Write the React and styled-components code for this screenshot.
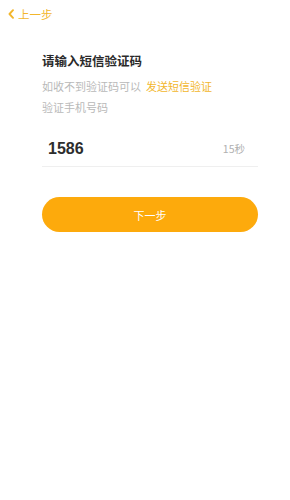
import React from 'react';
import styled, { createGlobalStyle } from 'styled-components';

const GlobalStyle = createGlobalStyle`
    body {
        margin: 0;
        background: #fff;
        font-family: "Noto Sans CJK SC", "Noto Sans", sans-serif;
    }
`;

const Page = styled.div`
    width: 290px;
    height: 500px;
    background: #fff;
    display: flex;
    flex-direction: column;
`;

const TopBar = styled.div`
    height: 27px;
    display: flex;
    align-items: center;
    padding: 0 0 0 8px;
`;

const BackLink = styled.a`
    display: flex;
    align-items: center;
    gap: 4px;
    color: #f2b62c;
    font-size: 11.5px;
    cursor: pointer;
`;

const Content = styled.div`
    padding: 25px 32px 0 42px;
    display: flex;
    flex-direction: column;
`;

const Title = styled.div`
    font-size: 12.5px;
    font-weight: 700;
    color: #2a2a2a;
    line-height: 18px;
`;

const Hint = styled.div`
    font-size: 11px;
    color: #b9b9b9;
    line-height: 15px;
    margin-top: ${p => p.gap || 0}px;
`;

const SendLink = styled.span`
    color: #f2b62c;
    margin-left: 5px;
`;

const CodeRow = styled.div`
    display: flex;
    align-items: center;
    justify-content: space-between;
    margin-top: 16px;
    padding: 0 13px 0 6px;
    height: 35px;
    border-bottom: 1px solid #efefef;
`;

const CodeValue = styled.span`
    font-family: "Liberation Sans", Arial, sans-serif;
    font-size: 16px;
    font-weight: 700;
    color: #2d2d2d;
`;

const Countdown = styled.span`
    font-size: 10.5px;
    color: #b0b0b0;
`;

const NextButton = styled.button`
    margin-top: 30px;
    height: 35px;
    width: 216px;
    border: none;
    border-radius: 18px;
    background: #fdaa0c;
    color: #fff;
    font-family: inherit;
    font-size: 11px;
    cursor: pointer;
`;

export default function App() {
    return (
        <Page>
            <GlobalStyle />
            <TopBar>
                <BackLink>
                    <svg width="6" height="10" viewBox="0 0 6 10">
                        <path d="M5 1.2 L1.5 5 L5 8.8" fill="none" stroke="#f2b62c" strokeWidth="1.9" strokeLinecap="round" strokeLinejoin="round" />
                    </svg>
                    上一步
                </BackLink>
            </TopBar>
            <Content>
                <Title>请输入短信验证码</Title>
                <Hint gap={9}>如收不到验证码可以<SendLink>发送短信验证</SendLink></Hint>
                <Hint gap={6}>验证手机号码</Hint>
                <CodeRow>
                    <CodeValue>1586</CodeValue>
                    <Countdown>15秒</Countdown>
                </CodeRow>
                <NextButton>下一步</NextButton>
            </Content>
        </Page>
    );
}
